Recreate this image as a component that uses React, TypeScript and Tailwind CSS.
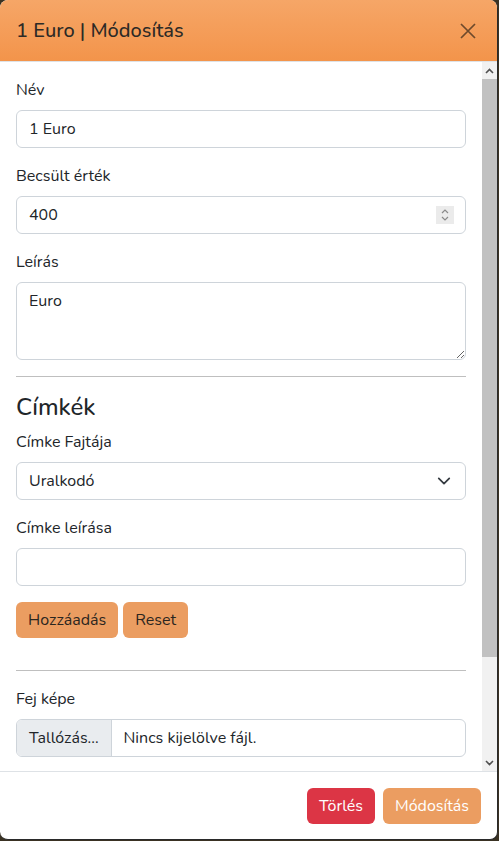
import { useState } from 'react'

const FONT = "font-['Nunito','Lato','Noto_Sans',sans-serif]"

function Label({ children }: { children: string }) {
  return <label className="mb-2 block text-base leading-6 text-[#212529]">{children}</label>
}

function TextInput({ value }: { value: string }) {
  const [v, setV] = useState(value)
  return (
    <input
      className="block h-[38px] w-full rounded-md border border-[#ced4da] bg-white px-3 text-base text-[#212529] outline-none"
      value={v}
      onChange={(e) => setV(e.target.value)}
    />
  )
}

function NumberInput({ value }: { value: string }) {
  return (
    <div className="flex h-[38px] w-full items-center rounded-md border border-[#ced4da] bg-white pl-3 pr-[11px]">
      <span className="flex-1 text-base text-[#212529]">{value}</span>
      <span className="flex h-[18px] w-[18px] flex-col items-center justify-center bg-[#ebebeb]">
        <svg width="10" height="14" viewBox="0 0 10 14" fill="none" stroke="#8a8a8a" strokeWidth="1.2">
          <path d="M2 5 L5 2 L8 5" />
          <path d="M2 9 L5 12 L8 9" />
        </svg>
      </span>
    </div>
  )
}

function Select({ value }: { value: string }) {
  return (
    <div className="flex h-[38px] w-full items-center rounded-md border border-[#ced4da] bg-white pl-3 pr-[14px]">
      <span className="flex-1 text-base text-[#212529]">{value}</span>
      <svg width="14" height="14" viewBox="0 0 16 16" fill="none" stroke="#343a40" strokeWidth="2" strokeLinecap="round" strokeLinejoin="round">
        <path d="M2 5l6 6 6-6" />
      </svg>
    </div>
  )
}

// classic scrollbar, drawn since the headless browser uses overlay bars
function Scrollbar() {
  return (
    <div className="flex w-[15px] shrink-0 flex-col bg-[#f1f1f1]">
      <div className="flex h-[17px] items-center justify-center">
        <svg width="9" height="6" viewBox="0 0 9 6" fill="none" stroke="#505050" strokeWidth="1.6">
          <path d="M1 5 L4.5 1.5 L8 5" />
        </svg>
      </div>
      <div className="h-[578px] bg-[#c1c1c1]" />
      <div className="flex-1" />
      <div className="flex h-[17px] items-center justify-center">
        <svg width="9" height="6" viewBox="0 0 9 6" fill="none" stroke="#505050" strokeWidth="1.6">
          <path d="M1 1 L4.5 4.5 L8 1" />
        </svg>
      </div>
    </div>
  )
}

export default function App() {
  const [desc, setDesc] = useState('Euro')

  return (
    <div className={`${FONT} h-[841px] w-[499px] bg-[#3a3223]`}>
      <div className="flex h-[840px] w-[498px] flex-col overflow-hidden rounded-lg border border-l-0 border-t-0 border-[#2a2a2a] bg-white">
        {/* header */}
        <div className="flex h-[62px] shrink-0 items-center justify-between border-b border-[#dee2e6] bg-gradient-to-b from-[#f6a667] to-[#f3944a] pl-4 pr-[17px]">
          <h5 className="text-xl leading-[30px] font-medium text-[#2d2a26]">1 Euro | Módosítás</h5>
          <button className="flex h-6 w-6 items-center justify-center">
            <svg width="18" height="18" viewBox="0 0 18 18" stroke="#6e4a2c" strokeWidth="1.7">
              <path d="M2 2 L16 16 M16 2 L2 16" />
            </svg>
          </button>
        </div>

        {/* body */}
        <div className="flex min-h-0 flex-1">
          <div className="flex-1 overflow-hidden px-4 pt-4">
            <div className="mb-4">
              <Label>Név</Label>
              <TextInput value="1 Euro" />
            </div>
            <div className="mb-4">
              <Label>Becsült érték</Label>
              <NumberInput value="400" />
            </div>
            <div className="mb-4">
              <Label>Leírás</Label>
              <textarea
                className="block h-[78px] w-full rounded-md border border-[#ced4da] px-3 py-[6px] text-base leading-6 text-[#212529] outline-none"
                value={desc}
                onChange={(e) => setDesc(e.target.value)}
              />
            </div>
            <hr className="mb-4 border-t border-[#bfbfbf]" />
            <h4 className="mb-2 text-2xl leading-[29px] font-medium text-[#212529]">Címkék</h4>
            <div className="mb-4">
              <Label>Címke Fajtája</Label>
              <Select value="Uralkodó" />
            </div>
            <div className="mb-4">
              <Label>Címke leírása</Label>
              <TextInput value="" />
            </div>
            <div className="flex gap-[5px]">
              <button className="h-9 rounded-md bg-[#eb9d61] px-3 text-base text-[#2b2620]">Hozzáadás</button>
              <button className="h-9 rounded-md bg-[#eb9d61] px-3 text-base text-[#2b2620]">Reset</button>
            </div>
            <hr className="mt-8 mb-4 border-t border-[#bfbfbf]" />
            <div>
              <Label>Fej képe</Label>
              <div className="flex h-[38px] w-full overflow-hidden rounded-md border border-[#ced4da] text-base text-[#212529]">
                <span className="flex items-center border-r border-[#ced4da] bg-[#e9ecef] px-3">Tallózás...</span>
                <span className="flex items-center px-3">Nincs kijelölve fájl.</span>
              </div>
            </div>
          </div>
          <Scrollbar />
        </div>

        {/* footer */}
        <div className="flex h-[68px] shrink-0 items-center justify-end gap-2 border-t border-[#dee2e6] px-4">
          <button className="h-9 rounded-md bg-[#dc3545] px-3 text-base text-white">Törlés</button>
          <button className="h-9 rounded-md bg-[#eb9d61] px-3 text-base text-white">Módosítás</button>
        </div>
      </div>
    </div>
  )
}
